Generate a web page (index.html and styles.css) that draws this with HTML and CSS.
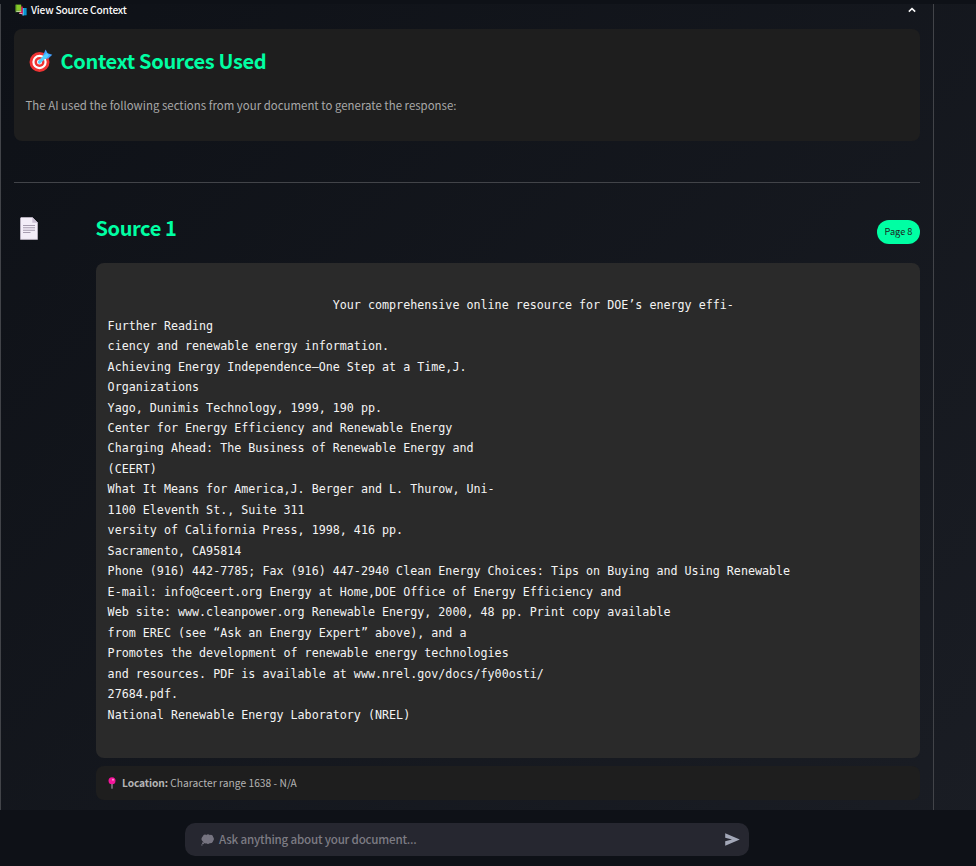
FILE: index.html
```html
<!DOCTYPE html>
<html lang="en">
<head>
<meta charset="utf-8">
<title>View Source Context</title>
<link rel="stylesheet" href="styles.css">
</head>
<body>
<div class="app">
  <div class="topbar"></div>
  <main class="content">
    <section class="expander">
      <div class="summary">
        <svg class="books" viewBox="0 0 12 12"><path fill="#0795d1" d="M6.8 4h4.8v7.2l-4 .4z"/><path fill="#74cdf0" d="M7.6 4h1v7.4h-1z"/><path fill="#d51857" d="M4.6 2.4h3.2v8l-3.2-.6z"/><path fill="#e8a9be" d="M4.2 9h3.2v1.3l-3.2-.5z"/><path fill="#86c72b" d="M.8.6h5.4v6.2H.8z"/><path fill="#4f8f22" d="M.4.8h1v7.4h-1z"/><path fill="#b9d795" d="M1.2 6.8h5v1.3h-5z"/></svg>
        <span class="summary-label">View Source Context</span>
        <svg class="chevron" viewBox="0 0 8 6"><path d="m.8 4.6 3.2-3 3.2 3" fill="none" stroke="#fafafa" stroke-width="1.5"/></svg>
      </div>
      <div class="intro">
        <h3 class="intro-title">
          <svg class="target" viewBox="0 0 24 24"><circle cx="10.5" cy="13" r="10" fill="#f03434"/><circle cx="10.5" cy="13" r="7.2" fill="#fff"/><circle cx="10.5" cy="13" r="5" fill="#f03434"/><circle cx="10.5" cy="13" r="2.5" fill="#fff"/><path d="m10.5 13 6-6" stroke="#52cfff" stroke-width="3.2" stroke-linecap="round"/><path fill="#429fff" d="m14 6.5 2.6-6 2 3.8 4.7 1.5-4 3.7-5 .5z"/><path fill="#52cfff" d="m14 7 4-3 2 2.2-2.5 3.2-3.5.8z"/></svg>
          <span>Context Sources Used</span>
        </h3>
        <p class="intro-text">The AI used the following sections from your document to generate the response:</p>
      </div>
      <hr class="rule">
      <div class="source">
        <svg class="page-icon" viewBox="0 0 18 23"><path fill="#f3edf8" stroke="#c7bdce" stroke-width=".7" d="M1 .5h11.5l5 5V22.4H.5V1z"/><path fill="#cbbfd4" d="M12.3.5v5.2h5.2z"/><path d="M3 8.5h12M3 10.7h12M3 13.2h12M3 15.5h7.5" stroke="#a69caf" stroke-width="1.1"/></svg>
        <div class="source-main">
          <div class="source-head">
            <h3 class="source-title">Source 1</h3>
            <span class="badge">Page 8</span>
          </div>
          <pre class="excerpt">

                                Your comprehensive online resource for DOE’s energy effi-
Further Reading
ciency and renewable energy information.
Achieving Energy Independence—One Step at a Time,J.
Organizations
Yago, Dunimis Technology, 1999, 190 pp.
Center for Energy Efficiency and Renewable Energy
Charging Ahead: The Business of Renewable Energy and
(CEERT)
What It Means for America,J. Berger and L. Thurow, Uni-
1100 Eleventh St., Suite 311
versity of California Press, 1998, 416 pp.
Sacramento, CA95814
Phone (916) 442-7785; Fax (916) 447-2940 Clean Energy Choices: Tips on Buying and Using Renewable
E-mail: info@ceert.org Energy at Home,DOE Office of Energy Efficiency and
Web site: www.cleanpower.org Renewable Energy, 2000, 48 pp. Print copy available
from EREC (see “Ask an Energy Expert” above), and a
Promotes the development of renewable energy technologies
and resources. PDF is available at www.nrel.gov/docs/fy00osti/
27684.pdf.
National Renewable Energy Laboratory (NREL)
</pre>
          <div class="location">
            <svg class="pin" viewBox="0 0 8 12"><path d="M4 6v5.7" stroke="#b9aebd" stroke-width="1"/><circle cx="4" cy="3.7" r="3.5" fill="#f4149a"/><circle cx="5" cy="2.7" r="1" fill="#ff92cf"/></svg>
            <span class="location-text"><strong>Location:</strong> Character range 1638 - N/A</span>
          </div>
        </div>
      </div>
    </section>
  </main>
  <footer class="footer">
    <div class="chat">
      <svg class="bubble" viewBox="0 0 13 12"><g fill="#767480"><rect x="1" y="1.6" width="11.4" height="6.6" rx="3"/><circle cx="4" cy="2.6" r="2"/><circle cx="7" cy="2.3" r="2"/><circle cx="9.9" cy="2.8" r="2"/><circle cx="2.4" cy="5" r="2"/><circle cx="11" cy="5" r="1.9"/><circle cx="4.3" cy="7.6" r="2"/><circle cx="7" cy="7.9" r="2.1"/><circle cx="9.7" cy="7.3" r="2"/><circle cx="2" cy="9.2" r="1"/><circle cx=".9" cy="10.9" r=".7"/></g></svg>
      <span class="placeholder">Ask anything about your document...</span>
      <svg class="send" viewBox="0 0 15 13"><path fill="#a3a8b8" d="M.2.2 14.8 6.5.2 12.8V8.2L7 6.5.2 4.8z"/></svg>
    </div>
  </footer>
</div>
</body>
</html>
```

FILE: styles.css
```css
* { box-sizing: border-box; }
body {
  margin: 0;
  background: #0e1117;
  color: #fafafa;
  font-family: "Noto Sans CJK SC", "Noto Sans", sans-serif;
}
svg { display: block; flex: none; }
.app {
  display: flex;
  flex-direction: column;
  height: 866px;
  background: linear-gradient(135deg, #0e1117 0%, #1a1d24 100%);
}
.topbar { height: 4px; flex: none; background: #0e1117; }
.content { height: 806px; flex: none; }
.expander {
  width: 934px;
  height: 806px;
  padding: 0 13px;
  border: solid #424449;
  border-width: 0 1px;
}
.summary { display: flex; align-items: center; height: 12px; padding: 0 4px 0 1px; }
.books { width: 12px; height: 12px; }
.summary-label { margin-left: 4px; font-size: 10.2px; font-weight: 500; letter-spacing: -0.19px; line-height: 12px; white-space: nowrap; }
.chevron { width: 8px; height: 6px; margin-left: auto; }
.intro {
  height: 112px;
  margin-top: 13px;
  padding: 17px 12px 0;
  border-radius: 8px;
  background: #1e1e1e;
}
.intro-title {
  display: flex;
  align-items: center;
  gap: 7.5px;
  height: 29px;
  margin: 0;
  padding-left: 3px;
  color: #00ffa3;
  font-size: 20px;
  font-weight: 600;
  letter-spacing: -0.35px;
  line-height: 29px;
  white-space: nowrap;
}
.target { width: 24px; height: 24px; }
.intro-text { margin: 20px 0 0 -0.5px; color: #a9a9a9; font-size: 11.4px; letter-spacing: 0.03px; line-height: 20px; }
.rule { height: 1px; margin: 41px 0 34px; border: 0; background: #424449; }
.source { display: flex; }
.page-icon { width: 18px; height: 23px; margin: 0 58px 0 6px; }
.source-main { flex: 1; min-width: 0; }
.source-head { display: flex; justify-content: space-between; height: 46px; }
.source-title { margin: -4px 0 0 -0.5px; color: #00ffa3; font-size: 20px; font-weight: 600; letter-spacing: -0.4px; line-height: 29px; }
.badge {
  width: 43px;
  height: 24px;
  margin-top: 3px;
  border-radius: 12px;
  background: #00ffa3;
  color: #1e1e1e;
  font-size: 9.2px;
  line-height: 23px;
  text-align: center;
}
.excerpt {
  height: 495px;
  margin: 0;
  padding: 11.6px;
  border-radius: 8px;
  background: #2a2a2a;
  color: #f4f4f4;
  font-family: "DejaVu Sans Mono", monospace;
  font-size: 11.69px;
  line-height: 20.48px;
}
.location {
  display: flex;
  align-items: center;
  height: 34px;
  margin-top: 8px;
  padding-left: 12px;
  border-radius: 8px;
  background: #1e1e1e;
  color: #b5b5b5;
  font-size: 10.2px;
}
.pin { width: 8px; height: 12px; }
.location-text { margin-left: 6px; letter-spacing: 0.04px; line-height: 20px; white-space: nowrap; }
.location-text strong { letter-spacing: -0.1px; }
.footer { height: 56px; flex: none; padding: 13px 0 0 185px; background: #0e1117; }
.chat {
  display: flex;
  align-items: center;
  width: 564px;
  height: 33px;
  padding: 0 9px 0 16px;
  border-radius: 10px;
  background: #262730;
}
.bubble { width: 13px; height: 12px; }
.placeholder { margin: -2px 0 0 5px; color: #7d7c84; font-size: 11.6px; font-weight: 500; letter-spacing: -0.21px; line-height: 20px; white-space: nowrap; }
.send { width: 15px; height: 13px; margin-left: auto; }
```
